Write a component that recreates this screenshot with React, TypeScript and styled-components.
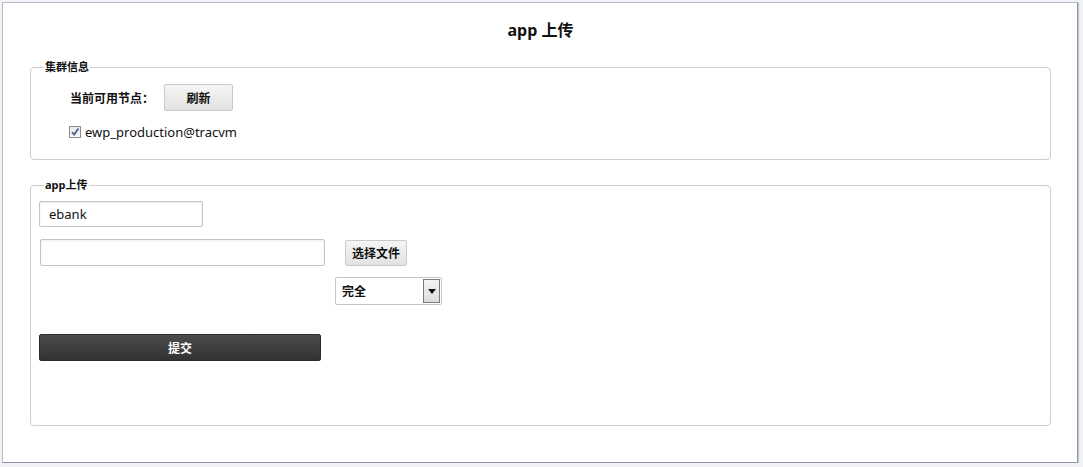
import React, { useState } from 'react';
import styled, { createGlobalStyle } from 'styled-components';

const GlobalStyle = createGlobalStyle`
    html, body {
        margin: 0;
        padding: 0;
        background: #f1f2f6;
    }
    body {
        font-family: "Noto Sans", "Noto Sans CJK SC", sans-serif;
        color: #111;
    }
`;

const Panel = styled.div`
    box-sizing: border-box;
    width: 1076px;
    height: 461px;
    margin: 2px 0 0 2px;
    padding: 15px 26px 0 27px;
    background: #fff;
    border: 1px solid #b4b9c9;
    border-right-color: #8d93a6;
    border-bottom-color: #8d93a6;
    box-shadow: 1px 1px 1px rgba(120, 128, 150, 0.35);
`;

const Title = styled.h1`
    margin: 0 0 17px;
    font-size: 16px;
    line-height: 24px;
    font-weight: bold;
    text-align: center;
`;

const Group = styled.fieldset<{ $pad: string; $gap?: number }>`
    box-sizing: border-box;
    margin: 0 0 ${p => p.$gap ?? 0}px;
    padding: ${p => p.$pad};
    border: 1px solid #cfcfcf;
    border-radius: 4px;
    min-width: 0;
`;

const Legend = styled.legend`
    margin-left: 5px;
    padding: 0 1px;
    font-size: 11px;
    line-height: 16px;
    font-weight: bold;
`;

const Row = styled.div<{ $indent?: number; $top?: number; $gap?: number }>`
    display: flex;
    align-items: center;
    gap: ${p => p.$gap ?? 0}px;
    margin-left: ${p => p.$indent ?? 0}px;
    margin-top: ${p => p.$top ?? 0}px;
`;

const Label = styled.span`
    font-size: 12px;
    font-weight: bold;
    width: 94px;
`;

const Button = styled.button<{ $w: number; $h: number }>`
    box-sizing: border-box;
    width: ${p => p.$w}px;
    height: ${p => p.$h}px;
    padding: 0;
    font-family: inherit;
    font-size: 12px;
    font-weight: bold;
    color: #111;
    background: linear-gradient(#f5f5f5, #e2e2e2);
    border: 1px solid #c9c9c9;
    border-radius: 2px;
    cursor: pointer;
`;

const SubmitButton = styled.button`
    box-sizing: border-box;
    width: 282px;
    height: 27px;
    padding: 0;
    font-family: inherit;
    font-size: 12px;
    font-weight: bold;
    color: #fff;
    background: linear-gradient(#4b4b4b, #333);
    border: 1px solid #2c2c2c;
    border-radius: 2px;
    cursor: pointer;
`;

const Check = styled.label`
    display: flex;
    align-items: center;
    gap: 4px;
    font-size: 13px;
    cursor: pointer;
`;

const Box = styled.span`
    display: inline-flex;
    width: 12px;
    height: 12px;
    box-sizing: border-box;
    border: 1px solid #8c8c8c;
    background: linear-gradient(#e8e8ee, #f8f8fa);
`;

const TextInput = styled.input<{ $w: number; $h: number }>`
    box-sizing: border-box;
    width: ${p => p.$w}px;
    height: ${p => p.$h}px;
    padding: 0 9px;
    font-family: inherit;
    font-size: 13px;
    color: #111;
    border: 1px solid #c4c4c4;
    border-radius: 2px;
    box-shadow: inset 0 1px 2px rgba(0, 0, 0, 0.08);
    outline: none;
`;

const Select = styled.div`
    box-sizing: border-box;
    display: flex;
    width: 107px;
    height: 28px;
    margin-left: 296px;
    border: 1px solid #c4c4c4;
    border-radius: 2px;
    background: #fff;
    font-size: 12px;
    font-weight: bold;
`;

const SelectText = styled.span`
    flex: 1;
    display: flex;
    align-items: center;
    padding-left: 6px;
`;

const SelectArrow = styled.span`
    box-sizing: border-box;
    width: 17px;
    margin: 1px;
    display: flex;
    align-items: center;
    justify-content: center;
    border: 1px solid #7a7a7a;
    background: linear-gradient(#f4f4f4, #dcdcdc);
`;

const App = () => {
    const [checked, setChecked] = useState(true);

    return (
        <>
            <GlobalStyle />
            <Panel>
                <Title>app 上传</Title>

                <Group $pad="9px 0 18px 8px" $gap={17}>
                    <Legend>集群信息</Legend>
                    <Row $indent={31}>
                        <Label>当前可用节点：</Label>
                        <Button $w={69} $h={27}>刷新</Button>
                    </Row>
                    <Row $indent={30} $top={12}>
                        <Check onClick={() => setChecked(!checked)}>
                            <Box>
                                {checked && (
                                    <svg width="10" height="10" viewBox="0 0 10 10">
                                        <path d="M2 5.2 L4.2 7.6 L8.4 1.4" fill="none" stroke="#4d5f92" strokeWidth="1.8" />
                                    </svg>
                                )}
                            </Box>
                            ewp_production@tracvm
                        </Check>
                    </Row>
                </Group>

                <Group $pad="8px 0 64px 8px">
                    <Legend>app上传</Legend>
                    <TextInput $w={164} $h={26} defaultValue="ebank" />
                    <Row $top={12} $gap={20} $indent={1}>
                        <TextInput $w={285} $h={27} />
                        <Button $w={62} $h={26}>选择文件</Button>
                    </Row>
                    <Row $top={11}>
                        <Select>
                            <SelectText>完全</SelectText>
                            <SelectArrow>
                                <svg width="8" height="5" viewBox="0 0 8 5">
                                    <path d="M0 0 H8 L4 5 Z" fill="#111" />
                                </svg>
                            </SelectArrow>
                        </Select>
                    </Row>
                    <Row $top={29}>
                        <SubmitButton>提交</SubmitButton>
                    </Row>
                </Group>
            </Panel>
        </>
    );
};

export default App;
